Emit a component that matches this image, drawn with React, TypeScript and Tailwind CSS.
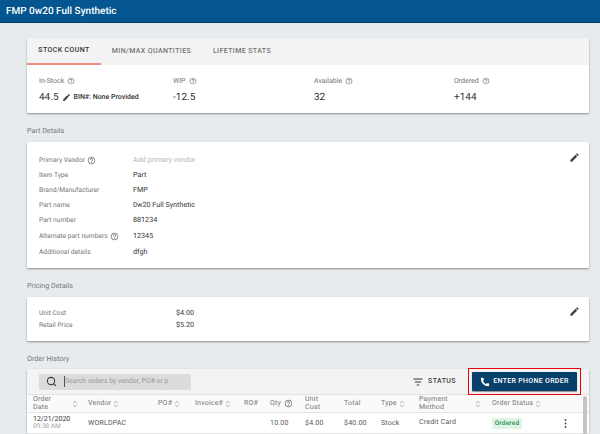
import { Phone, Search, ChevronsUpDown } from "lucide-react";

const Help = ({ s = 9 }: { s?: number }) => (
  <svg width={s} height={s} viewBox="0 0 24 24" fill="#757575" className="inline-block shrink-0">
    <path d="M11 18h2v-2h-2v2zm1-16C6.48 2 2 6.48 2 12s4.48 10 10 10 10-4.48 10-10S17.52 2 12 2zm0 18c-4.41 0-8-3.59-8-8s3.59-8 8-8 8 3.59 8 8-3.59 8-8 8zm0-14c-2.21 0-4 1.79-4 4h2c0-1.1.9-2 2-2s2 .9 2 2c0 2-3 1.75-3 5h2c0-2.25 3-2.5 3-5 0-2.21-1.79-4-4-4z" />
  </svg>
);
const Pencil = ({ s = 12 }: { s?: number }) => (
  <svg width={s} height={s} viewBox="0 0 24 24" fill="#424242" className="shrink-0">
    <path d="M3 17.25V21h3.75L17.81 9.94l-3.75-3.75L3 17.25zM20.71 7.04a1 1 0 0 0 0-1.41l-2.34-2.34a1 1 0 0 0-1.41 0l-1.83 1.83 3.75 3.75 1.83-1.83z" />
  </svg>
);
const Sort = () => <ChevronsUpDown size={8} strokeWidth={1.5} className="text-[#666] shrink-0" />;

const Stat = ({ label, value, w, children }: { label: string; value: string; w: string; children?: React.ReactNode }) => (
  <div className={w}>
    <div className="flex items-center gap-[3px] text-[7px] leading-[10px] text-[#757575]">{label}<Help s={8} /></div>
    <div className="flex items-center mt-[4px] h-[14px] text-[10px] text-[#333]">{value}{children}</div>
  </div>
);

const Detail = ({ label, value, help, h, muted }: { label: string; value: string; help?: boolean; h: string; muted?: boolean }) => (
  <div className={`flex items-center ${h}`}>
    <div className="w-[94px] flex items-center gap-[2px] text-[6.7px] text-[#757575]">{label}{help && <Help s={9} />}</div>
    <div className={`text-[7.2px] -mt-[1px] ${muted ? "text-[#b5b5b5]" : "text-[#333]"}`}>{value}</div>
  </div>
);

const Th = ({ children, sort }: { children: React.ReactNode; sort?: boolean }) => (
  <div className="flex items-center gap-[1px] text-[7px] leading-[7.5px] text-[#757575] tracking-[0.2px]">{children}{sort && <Sort />}</div>
);

export default function App() {
  return (
    <div className="w-[600px] h-[434px] overflow-hidden bg-[#e8ebee] font-['Roboto',sans-serif] [text-rendering:geometricPrecision]">
      <header className="h-[23px] bg-[#03568f] border-b border-[#02406c] flex items-center pl-[6px] text-white text-[10px] font-medium">
        FMP 0w20 Full Synthetic
      </header>
      <main className="pl-[27px] pr-[11px] pt-[15px]">
        <section className="bg-white rounded-[1px] shadow-[0_1px_2px_rgba(0,0,0,0.4)]">
          <div className="flex h-[27px] bg-[#f3f3f3]">
            <div className="w-[74px] flex items-center justify-center border-b-2 border-[#f28b82] text-[7px] font-medium tracking-[0.4px] text-[#333]">STOCK COUNT</div>
            <div className="w-[101px] flex items-center justify-center text-[7px] font-medium tracking-[0.4px] text-[#757575]">MIN/MAX QUANTITIES</div>
            <div className="w-[80px] flex items-center justify-center text-[7px] font-medium tracking-[0.4px] text-[#757575]">LIFETIME STATS</div>
          </div>
          <div className="flex h-[48px] pl-[12px] pt-[11px]">
            <Stat label="In-Stock" value="44.5" w="w-[134px]">
              <span className="ml-[3px] flex"><Pencil s={9} /></span>
              <span className="ml-[3px] text-[7px] font-medium text-[#333]">BIN#: None Provided</span>
            </Stat>
            <Stat label="WIP" value="-12.5" w="w-[141px]" />
            <Stat label="Available" value="32" w="w-[140px]" />
            <Stat label="Ordered" value="+144" w="w-[100px]" />
          </div>
        </section>

        <h2 className="h-[10px] mt-[13px] text-[7.2px] leading-[10px] text-[#757575]">Part Details</h2>
        <section className="relative mt-[6px] h-[126px] bg-white rounded-[1px] shadow-[0_1px_2px_rgba(0,0,0,0.4)] pl-[12px] pt-[11px]">
          <div className="absolute right-[9px] top-[10px]"><Pencil s={11} /></div>
          <Detail label="Primary Vendor" value="Add primary vendor" help h="h-[15px]" muted />
          <Detail label="Item Type" value="Part" h="h-[15px]" />
          <Detail label="Brand/Manufacturer" value="FMP" h="h-[15px]" />
          <Detail label="Part name" value="0w20 Full Synthetic" h="h-[15px]" />
          <Detail label="Part number" value="881234" h="h-[15px]" />
          <Detail label="Alternate part numbers" value="12345" help h="h-[17px]" />
          <Detail label="Additional details" value="dfgh" h="h-[15px]" />
        </section>

        <h2 className="h-[10px] mt-[13px] text-[7.2px] leading-[10px] text-[#757575]">Pricing Details</h2>
        <section className="relative mt-[6px] h-[44px] bg-white rounded-[1px] shadow-[0_1px_2px_rgba(0,0,0,0.4)] pl-[12px] pt-[10px]">
          <div className="absolute right-[9px] top-[9px]"><Pencil s={11} /></div>
          <div className="flex items-center h-[12px]"><div className="w-[137px] text-[6.7px] text-[#757575]">Unit Cost</div><div className="text-[7.2px] text-[#333]">$4.00</div></div>
          <div className="flex items-center h-[12px]"><div className="w-[137px] text-[6.7px] text-[#757575]">Retail Price</div><div className="text-[7.2px] text-[#333]">$5.20</div></div>
        </section>

        <h2 className="h-[10px] mt-[13px] text-[7.2px] leading-[10px] text-[#757575]">Order History</h2>
        <section className="relative mt-[5px] bg-white rounded-[1px] shadow-[0_1px_2px_rgba(0,0,0,0.4)]">
          <div className="flex items-center h-[25px] bg-[#f3f3f3] pl-[12px]">
            <div className="w-[152px] h-[16px] bg-[#dcdcdc] rounded-[1px] flex items-center pl-[7px]">
              <Search size={11} strokeWidth={2.2} className="text-[#333]" />
              <span className="ml-[7px] border-l border-[#555] text-[6.9px] text-[#9a9a9a]">Search orders by vendor, PO# or p</span>
            </div>
            <div className="ml-auto flex items-center gap-[5px] text-[7px] font-medium tracking-[0.4px] text-[#424242]">
              <svg width="10" height="8" viewBox="0 0 10 8" fill="none" stroke="#333" strokeWidth="1"><path d="M0.5 1h9M2 4h6M3.8 7h2.4" /></svg>
              STATUS
            </div>
            <div className="ml-[12px] mr-[8px] border-[1.5px] border-[#e8000b] p-[3px] -my-[1px]">
              <button className="w-[105px] h-[19px] bg-[#07406b] rounded-[1px] flex items-center justify-center gap-[3px] text-white text-[7px] font-medium tracking-[0.3px] shadow-[0_1px_1px_rgba(0,0,0,0.4)]">
                <Phone size={10} fill="white" strokeWidth={0} />
                ENTER PHONE ORDER
              </button>
            </div>
          </div>
          <div className="grid grid-cols-[55px_70px_37px_49px_26px_35px_39px_37px_38px_73px_72px_1fr] pl-[6px] items-center h-[19px] border-y border-[#e4e4e4] bg-[#fafafa]">
            <Th><span className="w-[37px]">Order<br />Date</span><Sort /></Th>
            <Th sort>Vendor</Th>
            <Th sort>PO#</Th>
            <Th sort>Invoice#</Th>
            <Th>RO#</Th>
            <Th>Qty&nbsp;<Help s={9} /></Th>
            <Th>Unit<br />Cost</Th>
            <Th>Total</Th>
            <Th sort>Type</Th>
            <Th><span className="w-[54px]">Payment<br />Method</span><Sort /></Th>
            <Th sort>Order Status</Th>
            <div />
          </div>
          <div className="grid grid-cols-[55px_70px_37px_49px_26px_35px_39px_37px_38px_73px_72px_1fr] pl-[6px] items-center h-[21px] border-b border-[#e4e4e4] text-[7px] text-[#555] tracking-[0.2px]">
            <div className="leading-[7.5px] tracking-normal"><div className="text-[#333]">12/21/2020</div><div className="text-[#9e9e9e] text-[6.5px]">09:38 AM</div></div>
            <div>WORLDPAC</div>
            <div />
            <div />
            <div />
            <div>10.00</div>
            <div>$4.00</div>
            <div>$40.00</div>
            <div>Stock</div>
            <div className="-mt-[1px]">Credit Card</div>
            <div><span className="inline-block w-[30px] h-[11px] leading-[11px] text-center rounded-[1px] bg-[#dff3e6] text-[#1e8e4e] text-[6.5px] font-medium">Ordered</span></div>
            <svg width="3" height="9" viewBox="0 0 3 9" fill="#444"><circle cx="1.5" cy="1" r="0.9" /><circle cx="1.5" cy="4.5" r="0.9" /><circle cx="1.5" cy="8" r="0.9" /></svg>
          </div>
          <div className="absolute right-[2px] top-[27px] w-[4px] h-[60px] bg-[#c4c4c4] rounded-full" />
        </section>
      </main>
    </div>
  );
}
